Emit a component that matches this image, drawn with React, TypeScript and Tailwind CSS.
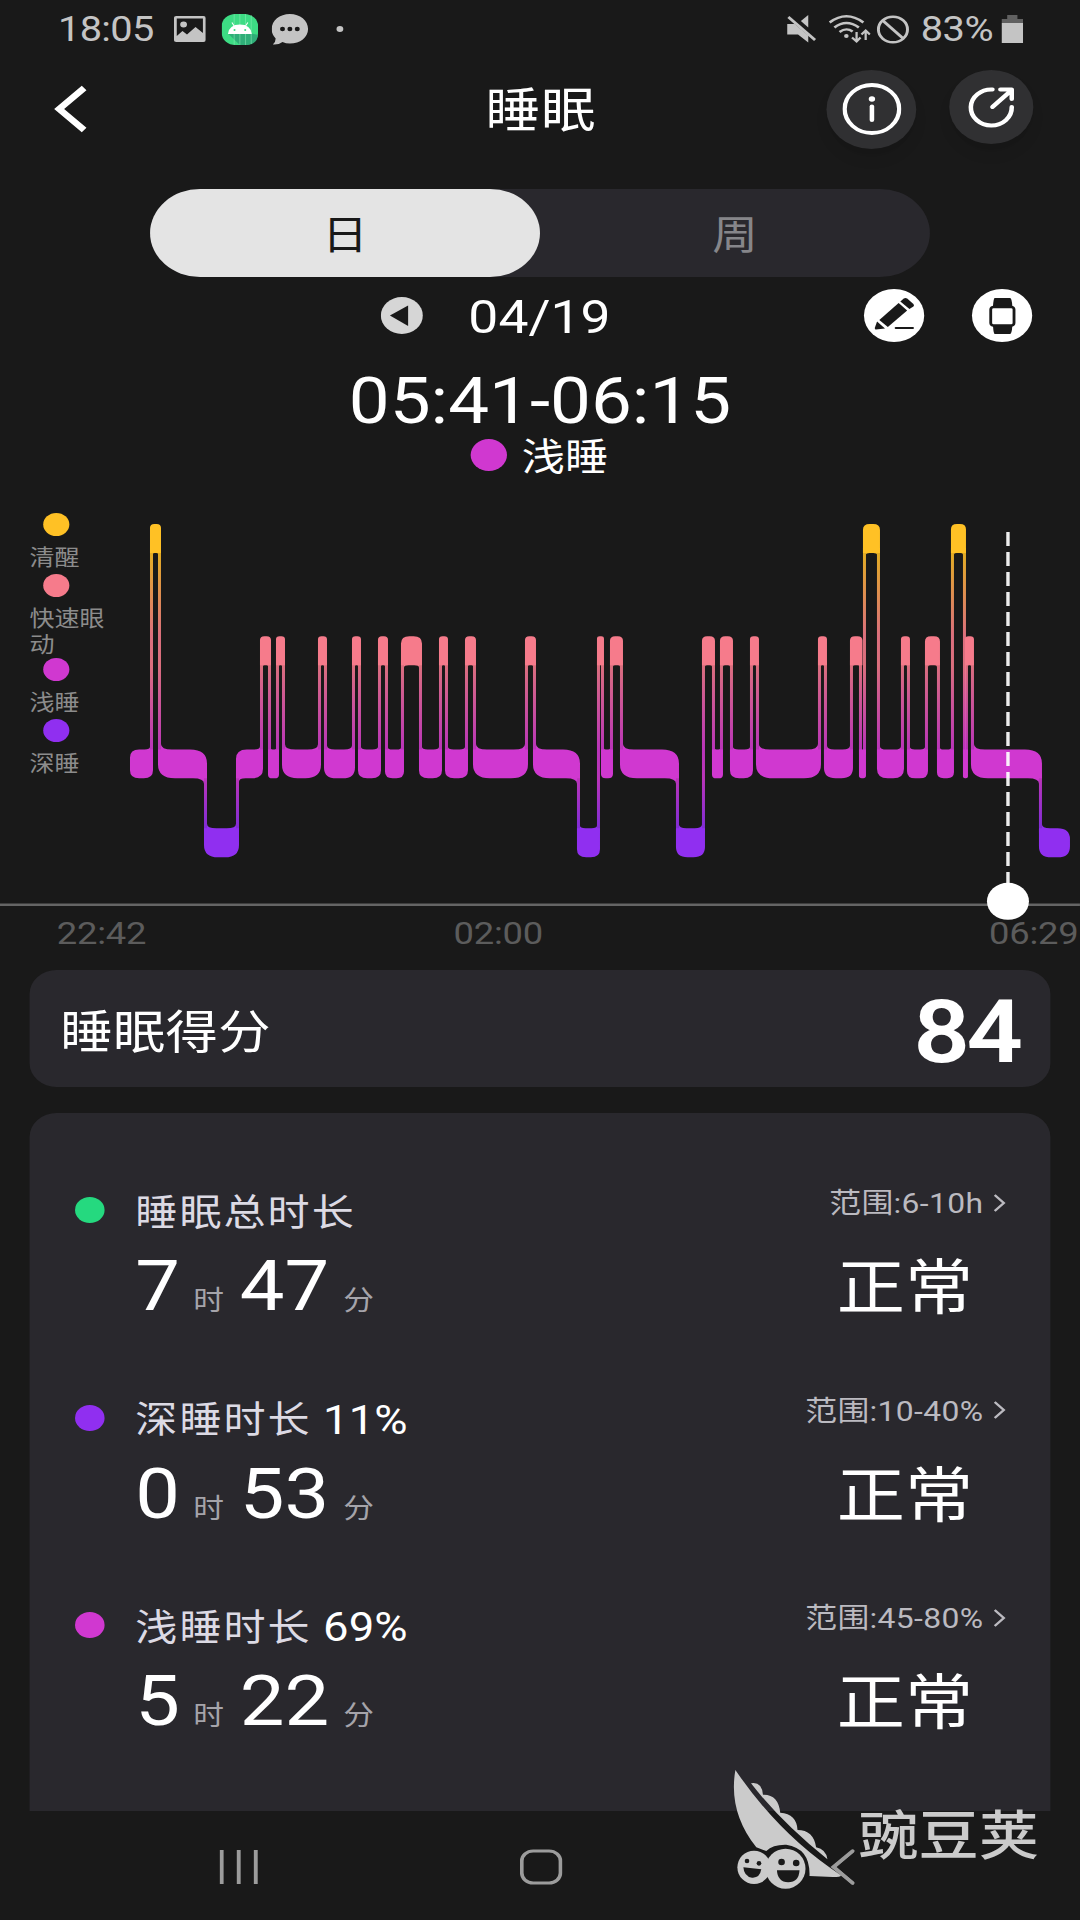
import type { ReactNode } from "react";

type Level = "awake" | "rem" | "light" | "deep";
type Segment = [start: number, end: number, level: Level];

const LEVELS: Record<Level, { top: number; bottom: number }> = {
  awake: { top: 524, bottom: 553 },
  rem: { top: 636.2, bottom: 665.3 },
  light: { top: 749.5, bottom: 778.3 },
  deep: { top: 828.3, bottom: 857.3 },
};

const SEGMENTS: Segment[] = [
  [130, 153, "light"], [150, 161, "awake"], [158, 207, "light"], [204, 239, "deep"],
  [236, 263, "light"], [260, 271, "rem"], [268, 279, "light"], [276, 285, "rem"],
  [282, 321, "light"], [318, 327, "rem"], [324, 355, "light"], [352, 361, "rem"],
  [358, 381, "light"], [378, 388, "rem"], [385, 404, "light"], [401, 422, "rem"],
  [419, 442, "light"], [439, 448, "rem"], [445, 468, "light"], [465, 476, "rem"],
  [473, 528, "light"], [525, 536, "rem"], [533, 580, "light"], [577, 600, "deep"],
  [597, 604, "rem"], [601, 613, "light"], [610, 623, "rem"], [620, 679, "light"],
  [676, 705, "deep"], [702, 715, "rem"], [712, 723, "light"], [720, 733, "rem"],
  [730, 753, "light"], [750, 759, "rem"], [756, 821, "light"], [818, 827, "rem"],
  [824, 853, "light"], [850, 862.5, "rem"], [859, 866, "light"], [863, 880, "awake"],
  [877, 904, "light"], [901, 910, "rem"], [907, 928, "light"], [925, 940, "rem"],
  [937, 954, "light"], [951, 966, "awake"], [963, 968, "light"], [965, 974, "rem"],
  [971, 1042, "light"], [1039, 1070, "deep"],
];

const LEGEND = [
  { label: "清醒", dot: "bg-[#ffc125]" },
  { label: "快速眼动", dot: "bg-[#f67b8b]", extra: "-mb-[3px]" },
  { label: "浅睡", dot: "bg-[#d038d0]" },
  { label: "深睡", dot: "bg-[#902ff0]" },
];

const METRICS = [
  { label: "睡眠总时长", percent: "", hours: "7", minutes: "47", range: "范围:6-10h", dot: "bg-[#25d97f]" },
  { label: "深睡时长", percent: "11%", hours: "0", minutes: "53", range: "范围:10-40%", dot: "bg-[#902ff0]" },
  { label: "浅睡时长", percent: "69%", hours: "5", minutes: "22", range: "范围:45-80%", dot: "bg-[#d038d0]" },
];

// -1: neighbour sits higher on the chart, 1: lower, 0: no neighbour
function direction(from: Level, to?: Segment) {
  if (!to) return 0;
  return LEVELS[to[2]].top < LEVELS[from].top ? -1 : 1;
}

function segmentPath(index: number) {
  const [x1, x2, level] = SEGMENTS[index];
  const { top, bottom } = LEVELS[level];
  const left = direction(level, SEGMENTS[index - 1]);
  const right = direction(level, SEGMENTS[index + 1]);
  const w = x2 - x1;
  const rx = Math.min(17, w * 0.4);
  const ry = Math.min(14, rx * 0.88);
  const tl = left === -1 ? 0 : 1;
  const bl = left === 1 ? 0 : 1;
  const tr = right === -1 ? 0 : 1;
  const br = right === 1 ? 0 : 1;
  let d =
    `M${x1 + rx * tl} ${top}H${x2 - rx * tr}q${rx * tr} 0 ${rx * tr} ${ry * tr}` +
    `V${bottom - ry * br}q0 ${ry * br} ${-rx * br} ${ry * br}H${x1 + rx * bl}` +
    `q${-rx * bl} 0 ${-rx * bl} ${-ry * bl}V${top + ry * tl}q0 ${-ry * tl} ${rx * tl} ${-ry * tl}Z`;

  // small fillets where the band flows into its connector
  const fx = Math.max(0, Math.min(11, (w - 6) * 0.32));
  const fy = fx * 0.5;
  if (left !== 0) {
    const y = left === -1 ? top : bottom;
    d += `M${x1 + 3} ${y}h${fx}q${-fx} 0 ${-fx} ${fy * left}Z`;
  }
  if (right !== 0) {
    const y = right === -1 ? top : bottom;
    d += `M${x2 - 3} ${y}h${-fx}q${fx} 0 ${fx} ${fy * right}Z`;
  }
  return d;
}

function SleepChart() {
  return (
    <svg viewBox="0 474 1080 446" preserveAspectRatio="none" className="col-start-1 row-start-1 h-[446px] w-full">
      <defs>
        <linearGradient id="stages" gradientUnits="userSpaceOnUse" x1="0" y1="524" x2="0" y2="857">
          <stop offset="0.087" stopColor="#ffc125" />
          <stop offset="0.336" stopColor="#f67b8b" />
          <stop offset="0.424" stopColor="#f67b8b" />
          <stop offset="0.676" stopColor="#d038d0" />
          <stop offset="0.765" stopColor="#d038d0" />
          <stop offset="0.912" stopColor="#902ff0" />
        </linearGradient>
      </defs>
      {SEGMENTS.slice(1).map(([x, , level], i) => {
        const prev = LEVELS[SEGMENTS[i][2]];
        const next = LEVELS[level];
        const y1 = Math.min(prev.bottom, next.bottom) - 5;
        const y2 = Math.max(prev.top, next.top) + 5;
        return <rect key={x} x={x} y={y1} width="3" height={y2 - y1} fill="url(#stages)" opacity="0.88" />;
      })}
      {SEGMENTS.map((segment, i) => (
        <path key={segment[0]} d={segmentPath(i)} fill="url(#stages)" />
      ))}
      <path d="M0 904.7H1080" stroke="#656565" strokeWidth="2.6" />
      <path d="M1008 532V886" stroke="#fff" strokeOpacity="0.92" strokeWidth="3.4" strokeDasharray="14 6" />
      <ellipse cx="1008" cy="901.3" rx="21" ry="18.5" fill="#fff" />
    </svg>
  );
}

function StatusBar() {
  return (
    <div className="flex h-[58px] items-center pl-[51px] text-[#c4c4c4]">
      <span className="w-[102px] pt-px text-[35px] leading-none tracking-[-0.600px]">18:05</span>
      <svg viewBox="0 0 28 26" className="h-[26px] w-[28px]">
        <path
          fillRule="evenodd"
          fill="currentColor"
          d="M2 0H26Q28 0 28 2V24Q28 26 26 26H2Q0 26 0 24V2Q0 0 2 0ZM2.5 2.5V20L7.5 15L11.5 18.5L19 11L25.5 17V2.5ZM8.5 5.5a3 3 0 1 1 0 6a3 3 0 0 1 0-6Z"
        />
      </svg>
      <svg viewBox="0 0 32 31" className="ml-[14px] h-[31px] w-[32px]">
        <rect width="32" height="31" rx="12" fill="#3ddc84" />
        <path d="M6 20L16 31H21Q31 31 32 21L26 19.5Z" fill="#2fae78" />
        <path d="M11 0V31M16 0V31M21 0V31M26 1V30" stroke="#8eedba" strokeWidth="0.5" />
        <path d="M5.5 20Q6.5 10.5 16 10.5Q25.5 10.5 26.5 20Z" fill="#fff" />
        <path d="M11 12L9 8.5M21 12L23 8.5" stroke="#fff" strokeWidth="0.9" />
        <circle cx="11.3" cy="16" r="0.9" fill="#3ddc84" />
        <circle cx="20.7" cy="16" r="0.9" fill="#3ddc84" />
      </svg>
      <svg viewBox="0 0 32 31" className="ml-[12px] h-[31px] w-[32px]">
        <path
          fill="currentColor"
          d="M16 0C25 0 32 6.5 32 15S25 29.5 16 29.5Q12.500 29.500 9.500 28Q6 31 1 30.500Q3.500 28 3.500 24.500Q0 20.500 0 15C0 6.500 7 0 16 0Z"
        />
        <circle cx="9.500" cy="15" r="2.200" fill="#191919" />
        <circle cx="16" cy="15" r="2.200" fill="#191919" />
        <circle cx="22.500" cy="15" r="2.200" fill="#191919" />
      </svg>
      <span className="ml-[25px] h-[6px] w-[6px] rounded-full bg-current" />

      <svg viewBox="0 0 26 28" className="ml-[390px] h-[28px] w-[26px]">
        <path d="M0.500 9H7L19 20.500V27.500L10 19.500H0.500Z" fill="currentColor" />
        <path d="M12.500 6L19 0V12.500Z" fill="currentColor" />
        <path d="M1.500 2L25 25" stroke="currentColor" strokeWidth="2.500" />
      </svg>
      <svg viewBox="0 0 37 28" className="ml-[11px] h-[28px] w-[37px]" fill="none" stroke="currentColor" strokeWidth="2.400">
        <path d="M0.800 7.500Q15.500-5 30.500 7.500M5 12.500Q15.500 3.500 26.500 12.500M9.500 17Q15.500 12 21 16.500" />
        <circle cx="15.500" cy="21" r="2" fill="currentColor" stroke="none" />
        <path d="M24.500 17V26M20.500 22.500L24.500 26.500L28 22.500M32.500 25V16M28.800 19.500L32.500 15.500L36.200 19.500" strokeWidth="2" />
      </svg>
      <svg viewBox="0 0 29 29" className="ml-[5px] h-[29px] w-[29px]" fill="none" stroke="currentColor" strokeWidth="2.600">
        <circle cx="14.500" cy="14.500" r="12.800" />
        <path d="M5.500 5.500L23.500 23.500" />
      </svg>
      <span className="ml-[10px] w-[71px] pt-px text-[35px] leading-none tracking-[-0.500px]">83%</span>
      <svg viewBox="0 0 19 28" className="h-[28px] w-[19px]">
        <path d="M5 0H14V4H19V8H0V4H5Z" fill="#606060" />
        <path d="M0 8H19V28H0Z" fill="currentColor" />
      </svg>
    </div>
  );
}

function Header() {
  return (
    <div className="flex h-[102px] items-center pl-[47px]">
      <svg viewBox="0 0 30 48" className="h-[48px] w-[30px]" fill="none" stroke="#fff" strokeWidth="6">
        <path d="M27 3L5 24L27 45" />
      </svg>
      <h1 className="ml-[350px] w-[101px] pt-[3px] text-[48px] leading-none tracking-[1px] text-white">睡眠</h1>
      <div className="ml-[199px] flex h-[79px] w-[79px] items-center justify-center rounded-full bg-[#303032] shadow-lg">
        <svg viewBox="0 0 52 52" className="h-[52px] w-[52px]" fill="none" stroke="#fff">
          <circle cx="26" cy="26" r="24" strokeWidth="3.800" />
          <path d="M26 23.500V37" strokeWidth="4" strokeLinecap="round" />
          <circle cx="26" cy="16" r="2.800" fill="#fff" stroke="none" />
        </svg>
      </div>
      <div className="mb-[5px] ml-[29px] flex h-[74px] w-[74px] items-center justify-center rounded-full bg-[#303032] shadow-lg">
        <svg viewBox="0 0 42 42" className="h-[42px] w-[42px]" fill="none" stroke="#fff" strokeWidth="4" strokeLinecap="round" strokeLinejoin="round">
          <path d="M22 3.500A18 18 0 1 0 39 21" />
          <path d="M22 21L38 5M29 3.500H39V13" />
        </svg>
      </div>
    </div>
  );
}

function RoundBadge({ children }: { children: ReactNode }) {
  return <div className="flex h-[53px] w-[53px] items-center justify-center rounded-full bg-white">{children}</div>;
}

function DateRow() {
  return (
    <div className="flex h-[77px] items-center pl-[335px]">
      <svg viewBox="0 0 37 37" className="h-[37px] w-[37px]">
        <circle cx="18.500" cy="18.500" r="18.500" fill="#d6d6d6" />
        <path d="M24 8.500V29L8 18.500Z" fill="#191919" />
      </svg>
      <span className="ml-[40px] w-[130px] pt-[2px] text-[47px] leading-none text-white">04/19</span>
      <div className="ml-[218px] flex gap-[42px]">
        <RoundBadge>
          <svg viewBox="0 0 38 34" className="mb-1 h-[34px] w-[38px]" fill="#191919">
            <path d="M5.500 23L22.500 6L30 13.500L13 30Z" />
            <path d="M24 4.500L27 1.500Q28.500 0.500 30 1.500L35.500 7Q36.500 8.500 35.500 9.500L32 12Z" />
            <path d="M3.500 24.500L10.500 31.500L2.500 32.500Q1.500 32.500 1.500 31Z" />
            <rect x="19" y="30" width="17" height="2" rx="1" />
          </svg>
        </RoundBadge>
        <RoundBadge>
          <svg viewBox="0 0 24 36" className="h-[36px] w-[24px]" fill="#191919">
            <path d="M5 0H18.500Q20 0 20.500 8H3.500Q4 0 5 0ZM3.500 28H20.500Q20 36 18.500 36H5Q4 36 3.500 28Z" />
            <rect x="1.500" y="9" width="20.500" height="18.500" rx="2.500" fill="#fff" stroke="#191919" strokeWidth="2.500" />
          </svg>
        </RoundBadge>
      </div>
    </div>
  );
}

function MetricRow({ metric }: { metric: (typeof METRICS)[number] }) {
  return (
    <div className="flex h-[207.500px] pl-[40px]">
      <div className={`mt-[26px] h-[26px] w-[26px] rounded-full ${metric.dot}`} />
      <div className="ml-[27px] mt-[21px] flex-1">
        <div className="flex h-[42px] items-center gap-[14px]">
          <span className="text-[37px] leading-none tracking-[1.800px] text-[#dcdae4]">{metric.label}</span>
          <span className="-ml-[4px] text-[40px] leading-none text-white">{metric.percent}</span>
        </div>
        <div className="mt-[15px] flex items-baseline leading-[74px]">
          <span className="w-[51px] text-[70px] text-white">{metric.hours}</span>
          <span className="w-[41px] text-[27px] text-[#a5a4aa]">时</span>
          <span className="w-[91px] text-[70px] text-white">{metric.minutes}</span>
          <span className="text-[27px] text-[#a5a4aa]">分</span>
        </div>
      </div>
      <div className="mt-[15px] mr-[39px] flex flex-col items-end">
        <div className="flex h-[36px] items-center gap-[8px] text-[#bbbac0]">
          <span className="text-[28px] leading-none tracking-[0.300px]">{metric.range}</span>
          <svg viewBox="0 0 12 18" className="mb-[3px] h-[18px] w-[12px]" fill="none" stroke="currentColor" strokeWidth="2.200">
            <path d="M2 1L10 9L2 17" />
          </svg>
        </div>
        <span className="mt-[35px] mr-[29px] text-[60px] leading-[64px] text-white">正常</span>
      </div>
    </div>
  );
}

function NavBar() {
  return (
    <div className="flex h-[109px] items-start pt-[38px] pl-[193px] text-[#9c9c9c]">
      <svg viewBox="0 0 34 36" className="h-[36px] w-[34px]" stroke="currentColor" strokeWidth="3.400">
        <path d="M2 1V35M17 1V35M32 1V35" />
      </svg>
      <svg viewBox="0 0 38 36" className="ml-[230px] h-[36px] w-[38px]" fill="none" stroke="currentColor" strokeWidth="3.200">
        <rect x="2" y="2" width="34" height="32" rx="10" />
      </svg>
      <svg viewBox="0 0 22 36" className="ml-[235px] h-[36px] w-[22px]" fill="none" stroke="currentColor" strokeWidth="3.400">
        <path d="M20 2L3 18L20 34" strokeLinecap="round" />
      </svg>
    </div>
  );
}

function Watermark() {
  return (
    <div className="absolute top-[1740px] left-[616px] flex h-[180px] w-[334px] text-[#cbcbcb]">
      <svg viewBox="80 0 390 540" preserveAspectRatio="none" className="ml-[23px] h-[180px] w-[114px] shrink-0">
        <g fill="currentColor">
          <path d="M107 90Q240 285 422 404Q432 411 400 411L330 408Q333 325 260 314Q220 313 200 333L170 322Q85 215 107 90Z" />
          <path d="M154 130Q186 124 190 164Q236 162 242 218Q292 222 294 270Q342 270 350 322Q380 328 384 358Q244 246 154 130Z" />
          <circle cx="163" cy="382" r="50" />
          <circle cx="258" cy="386" r="60" />
        </g>
        <g fill="#191919">
          <circle cx="142" cy="363" r="7" />
          <circle cx="178" cy="370" r="7" />
          <circle cx="246" cy="366" r="10" />
          <circle cx="290" cy="369" r="10" />
          <path d="M131 382L185 388Q180 415 157 413Q133 410 131 382Z" />
          <path d="M232 391H300Q298 427 266 427Q234 426 232 391Z" />
        </g>
        <path d="M460 334L404 381L460 429" fill="none" stroke="#9c9c9c" strokeWidth="9" strokeLinecap="round" />
      </svg>
      <span className="mt-[67px] ml-[2px] text-[53px] leading-[60px] font-medium whitespace-nowrap">豌豆荚</span>
    </div>
  );
}

export default function App() {
  return (
    <div className="h-[1920px] w-[1080px] overflow-hidden bg-[#191919]">
      <div className="relative h-[1920px] w-[950px] origin-top-left scale-x-[1.1368] font-[Roboto,'Noto_Sans_CJK_SC',sans-serif]">
        <StatusBar />
        <Header />

        <div className="mt-[29px] ml-[132px] flex h-[88px] w-[686px] rounded-full bg-[#29282d] text-[40px]">
          <div className="flex flex-1 items-center justify-center rounded-full bg-[#e4e4e4] pt-[6px] text-[#191919]">日</div>
          <div className="flex flex-1 items-center justify-center pt-[6px] text-[#86868a]">周</div>
        </div>

        <DateRow />

        <div className="flex h-[82px] items-center justify-center pt-[14px] text-[64px] leading-none text-white">
          05:41-06:15
        </div>
        <div className="flex h-[38px] items-center pl-[414px]">
          <span className="h-[32px] w-[32px] rounded-full bg-[#d038d0]" />
          <span className="ml-[13px] pt-[4px] text-[38px] leading-none text-white">浅睡</span>
        </div>

        <div className="grid">
          <SleepChart />
          <div className="col-start-1 row-start-1 flex w-[100px] flex-col gap-[4px] pt-[39px] pl-[26px]">
            {LEGEND.map((item) => (
              <div key={item.label} className={item.extra}>
                <div className={`ml-[12px] h-[23px] w-[23px] rounded-full ${item.dot}`} />
                <div className="mt-[9px] -mb-px w-[68px] text-[22px] leading-[26px] text-[#8c8c8c]">{item.label}</div>
              </div>
            ))}
          </div>
        </div>
        <div className="flex h-[50px] text-[32px] leading-[26px] tracking-[-0.200px] text-[#5c5c5c]">
          <span className="ml-[50px] w-[349px]">22:42</span>
          <span className="w-[471px]">02:00</span>
          <span>06:29</span>
        </div>

        <div className="mx-[26px] flex h-[117px] items-center justify-between rounded-[24px] bg-[#29282d] pr-[27px] pl-[27px] text-white">
          <span className="pt-[6px] text-[46px] leading-none tracking-[0.300px]">睡眠得分</span>
          <span className="pt-[8px] text-[87px] leading-none font-semibold tracking-[-3px]">84</span>
        </div>

        <div className="mx-[26px] mt-[26px] h-[698px] overflow-hidden rounded-t-[24px] bg-[#29282d] pt-[58px]">
          {METRICS.map((metric) => (
            <MetricRow key={metric.label} metric={metric} />
          ))}
        </div>

        <NavBar />
        <Watermark />
      </div>
    </div>
  );
}
